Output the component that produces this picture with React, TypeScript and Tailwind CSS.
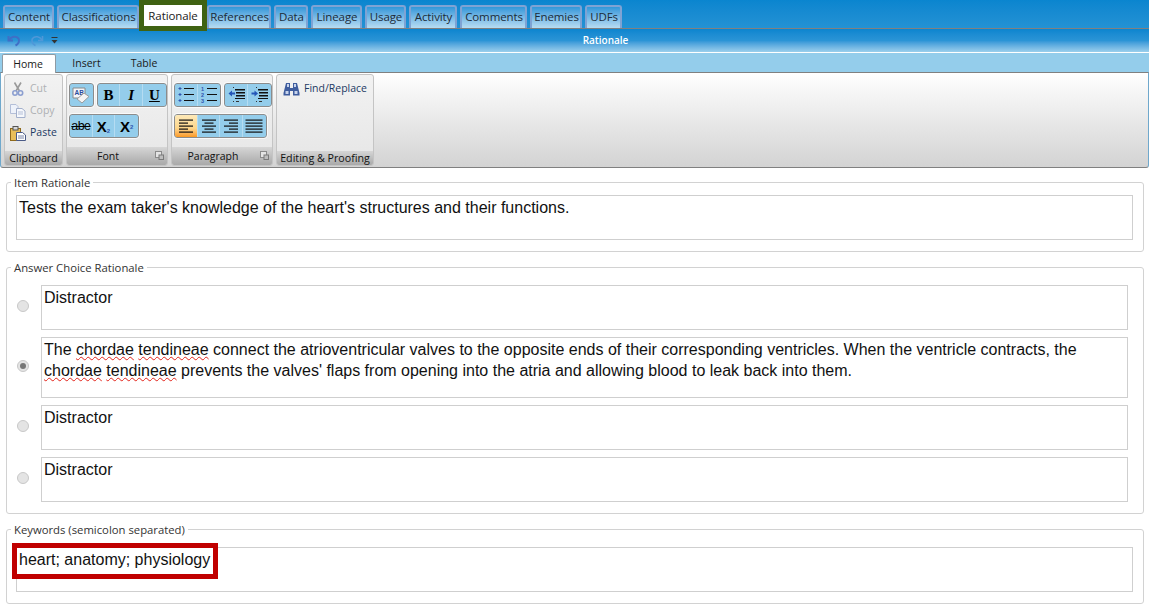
import React from 'react';

const UI_FONT = "font-['Open_Sans','Noto_Sans',sans-serif]";
const BODY_FONT = "font-['Liberation_Sans',Arial,sans-serif]";

const TABS = [
  { label: 'Content', width: 'w-[51px]' },
  { label: 'Classifications', width: 'w-[82px]' },
  { label: 'Rationale', width: 'w-[68px]' },
  { label: 'References', width: 'w-[64px] -ml-[3px]' },
  { label: 'Data', width: 'w-[34px]' },
  { label: 'Lineage', width: 'w-[51px]' },
  { label: 'Usage', width: 'w-[41px]' },
  { label: 'Activity', width: 'w-[48px]' },
  { label: 'Comments', width: 'w-[67px]' },
  { label: 'Enemies', width: 'w-[52px]' },
  { label: 'UDFs', width: 'w-[37px]' },
];

function ItemTab({ label, width }: { label: string; width: string }) {
  if (label === 'Rationale') {
    return (
      <div className={`z-10 -ml-[3px] flex h-[31px] shrink-0 items-center justify-center self-start border-[5px] border-[#3f6212] bg-white text-[11.5px] tracking-[-0.1px] text-[#222] ${width}`}>
        {label}
      </div>
    );
  }
  return (
    <div className={`flex h-[23px] shrink-0 items-center justify-center rounded-t-[3px] border-x-[2px] border-t-[2px] border-[#7fa3d4] bg-gradient-to-b from-[#2f97d9] to-[#b6dcf2] pb-[1px] pl-[1px] text-[11.5px] tracking-[-0.1px] text-[#1c2b38] ${width}`}>
      {label}
    </div>
  );
}

function Cell({ children, active, last }: { children: React.ReactNode; active?: boolean; last?: boolean }) {
  return (
    <div
      className={`flex h-full w-[22.7px] items-center justify-center ${last ? '' : 'border-r border-[#b5dcf2]'} ${
        active ? 'bg-gradient-to-b from-[#fde9b8] via-[#fdd68a] via-60% to-[#fb9a1e]' : ''
      }`}
    >
      {children}
    </div>
  );
}

function ButtonGroup({ children }: { children: React.ReactNode }) {
  return (
    <div className="flex h-[24px] overflow-hidden rounded-[3px] border border-[#8c8c8c] bg-[#94cdeb] outline outline-1 outline-white/70">
      {children}
    </div>
  );
}

function RibbonGroup({ title, width, small, launcher, children }: { title: string; width: string; small?: boolean; launcher?: boolean; children: React.ReactNode }) {
  return (
    <div className={`flex h-[92px] flex-col overflow-hidden rounded-[3px] border border-[#c4c4c4] bg-gradient-to-b from-[#f2f2f2] to-[#e6e6e6] ${width}`}>
      <div className="flex-1">{children}</div>
      <div
        className={`relative flex items-center justify-center bg-gradient-to-b from-[#d6d6d6] to-[#a9a9a9] text-[#111] ${
          small ? 'h-[14px] text-[10.7px]' : 'h-[18px] pr-[18px] pt-[1px] text-[10.5px]'
        }`}
      >
        {title}
        {launcher && (
          <svg viewBox="0 0 9 9" className="absolute right-[3px] top-[4px] h-[9px] w-[9px]">
            <rect x="0.5" y="0.5" width="6" height="6" fill="#e4e4e4" stroke="#8a8a8a" />
            <rect x="4" y="4" width="4.5" height="4.5" fill="#bdbdbd" stroke="#7a7a7a" />
          </svg>
        )}
      </div>
    </div>
  );
}

function AlignIcon({ align }: { align: 'left' | 'center' | 'right' | 'justify' }) {
  const rows = align === 'justify' ? [17, 17, 17, 17, 17] : [14, 9, 14, 9, 14];
  return (
    <svg viewBox="0 0 18 14" className="h-[14px] w-[18px]">
      {rows.map((w, i) => {
        const x = align === 'right' ? 16 - w : align === 'center' ? 9 - w / 2 : align === 'left' ? 2 : 0.5;
        return <rect key={i} x={x} y={i * 3 + 0.5} width={w} height="1.2" fill="#111" />;
      })}
    </svg>
  );
}

function ListIcon({ numbered }: { numbered?: boolean }) {
  return (
    <svg viewBox="0 0 16 16" className="h-[16px] w-[16px]">
      {[1, 7, 13].map((y, i) => (
        <g key={y}>
          {numbered ? (
            <text x="0" y={y + 2.5} fontSize="5.5" fontFamily="Liberation Sans" fontWeight="700" fill="#2f55b0">
              {i + 1}
            </text>
          ) : (
            <path d={`M0.5 ${y + 0.5} H3.5 M2 ${y - 1} V${y + 2}`} stroke="#2f55b0" strokeWidth="1" />
          )}
          <rect x="6" y={y} width="10" height="1" fill="#111" />
        </g>
      ))}
    </svg>
  );
}

function IndentIcon({ flip }: { flip?: boolean }) {
  return (
    <svg viewBox="0 0 17 16" className="h-[16px] w-[17px]">
      <path d={flip ? 'M7 6.5 L3.5 3.5 L3.5 5.5 L0.5 5.5 L0.5 7.5 L3.5 7.5 L3.5 9.5 Z' : 'M0.5 6.5 L4 3.5 L4 5.5 L7 5.5 L7 7.5 L4 7.5 L4 9.5 Z'} fill="#2456b8" />
      <rect x="5" y="0" width="1" height="1" fill="#333" />
      <rect x="7" y="2" width="10" height="1.5" fill="#111" />
      <rect x="8" y="5" width="9" height="1.5" fill="#111" />
      <rect x="8" y="8" width="9" height="1.5" fill="#111" />
      <rect x="7" y="11" width="10" height="1" fill="#111" />
      <rect x="5" y="14" width="1" height="1" fill="#333" />
      <rect x="8" y="14" width="3" height="1" fill="#333" />
    </svg>
  );
}

function MenuIcon({ kind }: { kind: 'cut' | 'copy' | 'paste' }) {
  if (kind === 'cut') {
    return (
      <svg viewBox="0 0 12 14" className="h-[14px] w-[12px]">
        <path d="M2.5 0.5 L7.5 9 M9 0.5 L4 9" stroke="#9a9a9a" strokeWidth="1.6" fill="none" />
        <circle cx="3" cy="11" r="2.2" fill="none" stroke="#8c9fd0" strokeWidth="1.6" />
        <circle cx="8.5" cy="11" r="2.2" fill="none" stroke="#8c9fd0" strokeWidth="1.6" />
      </svg>
    );
  }
  if (kind === 'copy') {
    return (
      <svg viewBox="0 0 16 14" className="h-[14px] w-[16px]">
        <path d="M0.5 0.5 H6 L8 2.5 V9.5 H0.5 Z" fill="#eef2fa" stroke="#b4bfd8" />
        <path d="M6.5 4.5 H12 L15 7 V13.5 H6.5 Z" fill="#f6f8fc" stroke="#a3b0cc" />
        <path d="M8 8 H13 M8 10 H13" stroke="#b4bfd8" />
      </svg>
    );
  }
  return (
    <svg viewBox="0 0 16 15" className="h-[15px] w-[16px]">
      <rect x="0.5" y="2.5" width="10" height="12" fill="#e9bf5a" stroke="#8f6a1c" />
      <rect x="3" y="0.5" width="5" height="3.5" fill="#d8d8d8" stroke="#555" />
      <path d="M6.5 6.5 H12.5 L15.5 9 V14.5 H6.5 Z" fill="#fff" stroke="#4a5a86" />
      <path d="M8 10 H14 M8 12 H14" stroke="#7a86a8" />
    </svg>
  );
}

function ClipboardRow({ kind, label, disabled }: { kind: 'cut' | 'copy' | 'paste'; label: string; disabled?: boolean }) {
  return (
    <div className="flex h-[22px] items-center">
      <div className="flex w-[25px] justify-center">
        <MenuIcon kind={kind} />
      </div>
      <span className={`text-[10.5px] ${disabled ? 'text-[#aeb0b3]' : 'text-[#1d3a63]'}`}>{label}</span>
    </div>
  );
}

function Ribbon() {
  return (
    <div className={`${UI_FONT}`}>
      <div className="flex h-[23px] items-center bg-gradient-to-b from-[#0a85cf] via-[#2a94d6] to-[#9bcfec] pl-[7px]">
        <svg viewBox="0 0 14 13" className="h-[13px] w-[14px]" fill="none">
          <path d="M1.5 2 V6.5 H6" stroke="#3f6fc6" strokeWidth="2" />
          <path d="M2 6 C4 2.5 9 1.5 11.5 4.5 C13 7 11.5 10 8.5 11.5" stroke="#3f6fc6" strokeWidth="2" />
        </svg>
        <svg viewBox="0 0 14 13" className="ml-[9px] h-[13px] w-[14px]" fill="none">
          <path d="M12.5 2 V6.5 H8" stroke="#4f98d8" strokeWidth="1.6" />
          <path d="M12 6 C10 2.5 5 1.5 2.5 4.5 C1 7 2.5 10 5.5 11.5" stroke="#4f98d8" strokeWidth="1.6" />
        </svg>
        <svg viewBox="0 0 7 7" className="ml-[7px] h-[7px] w-[7px]">
          <rect x="0.5" y="0" width="6" height="1" fill="#333" />
          <path d="M0.5 3 H6.5 L3.5 6.5 Z" fill="#333" />
        </svg>
        <div className="flex-1 text-center text-[10px] font-semibold text-white">
          <span className="relative left-[2px]">Rationale</span>
        </div>
      </div>
      <div className="h-px bg-white" />
      <div className="flex h-[19px] items-end bg-[#94cdeb] pl-[2px] text-[10.5px] text-[#1a1a1a]">
        <div className="z-10 flex h-[19px] w-[54px] translate-y-px items-center justify-center rounded-t-[2px] border-x border-t border-[#8e9aa3] bg-white pr-[2px] pt-[1px]">Home</div>
        <div className="flex h-[19px] w-[58px] items-center justify-center pl-[3px] pt-[2px]">Insert</div>
        <div className="flex h-[19px] w-[58px] items-center justify-center pl-[2px] pt-[2px]">Table</div>
      </div>
      <div className="flex h-[96px] gap-[3px] rounded-b-[3px] border border-[#808080] border-x-[#6fa8cc] bg-gradient-to-b from-white to-[#d3d3d3] pt-[1px] pl-[3px] pr-[1px]">
        <RibbonGroup title="Clipboard" width="w-[59px]" small>
          <div className="pt-[3px]">
            <ClipboardRow kind="cut" label="Cut" disabled />
            <ClipboardRow kind="copy" label="Copy" disabled />
            <ClipboardRow kind="paste" label="Paste" />
          </div>
        </RibbonGroup>
        <RibbonGroup title="Font" width="w-[102px]" launcher>
          <div className="flex flex-col gap-[7px] pl-[2px] pt-[8px]">
            <div className="flex gap-[3px]">
              <ButtonGroup>
                <Cell last>
                  <svg viewBox="0 0 18 17" className="h-[17px] w-[18px]">
                    <path d="M1 1 H13 V11 H1 Z" fill="#f4f6fa" stroke="#8a8a8a" />
                    <text x="2.5" y="8" fontSize="6.5" fontWeight="700" fontFamily="Liberation Sans" fill="#274b9c">AB</text>
                    <path d="M5 12 L12 6 L17 9.5 L10 16 Z" fill="#f4f4f4" stroke="#9a9a9a" />
                  </svg>
                </Cell>
              </ButtonGroup>
              <ButtonGroup>
                <Cell><span className="font-['Liberation_Serif',serif] text-[15px] font-bold leading-none text-black">B</span></Cell>
                <Cell><span className="font-['Liberation_Serif',serif] text-[15px] font-bold italic leading-none text-black">I</span></Cell>
                <Cell last><span className="font-['Liberation_Serif',serif] text-[15px] font-bold leading-none text-black underline">U</span></Cell>
              </ButtonGroup>
            </div>
            <div className="flex">
              <ButtonGroup>
                <Cell><span className="font-['Liberation_Sans',sans-serif] text-[12.5px] leading-none tracking-[-0.6px] text-black line-through">abe</span></Cell>
                <Cell>
                  <span className="font-['Liberation_Sans',sans-serif] text-[15px] font-bold leading-none text-black">X<sub className="text-[6px] text-[#2f55b0]">2</sub></span>
                </Cell>
                <Cell last>
                  <span className="font-['Liberation_Sans',sans-serif] text-[15px] font-bold leading-none text-black">X<sup className="text-[6px] text-[#2f55b0]">2</sup></span>
                </Cell>
              </ButtonGroup>
            </div>
          </div>
        </RibbonGroup>
        <RibbonGroup title="Paragraph" width="w-[102px]" launcher>
          <div className="flex flex-col gap-[7px] pl-[2px] pt-[8px]">
            <div className="flex gap-[3px]">
              <ButtonGroup>
                <Cell><ListIcon /></Cell>
                <Cell last><ListIcon numbered /></Cell>
              </ButtonGroup>
              <ButtonGroup>
                <Cell><IndentIcon /></Cell>
                <Cell last><IndentIcon flip /></Cell>
              </ButtonGroup>
            </div>
            <div className="flex">
              <ButtonGroup>
                <Cell active><AlignIcon align="left" /></Cell>
                <Cell><AlignIcon align="center" /></Cell>
                <Cell><AlignIcon align="right" /></Cell>
                <Cell last><AlignIcon align="justify" /></Cell>
              </ButtonGroup>
            </div>
          </div>
        </RibbonGroup>
        <RibbonGroup title="Editing & Proofing" width="w-[98px]" small>
          <div className="flex items-center gap-[4px] pl-[6px] pt-[6px]">
            <svg viewBox="0 0 17 14" className="h-[14px] w-[17px]">
              <path d="M3 1 H7 V6 H10 V1 H14 L16.5 11 V13.5 H10 V9 H7 V13.5 H0.5 V11 Z" fill="#3f5d9e" />
              <path d="M2.5 9 H5.5 V12 H2.5 Z M11.5 9 H14.5 V12 H11.5 Z M4 2 H6 V5 H4 Z M11 2 H13 V5 H11 Z" fill="#c8d4ec" />
            </svg>
            <span className="text-[10.5px] text-[#1d3a63]">Find/Replace</span>
          </div>
        </RibbonGroup>
      </div>
    </div>
  );
}

function Box({ height, children }: { height: string; children?: React.ReactNode }) {
  return (
    <div className={`border border-[#cfcfcf] px-[2px] pt-[1px] ${BODY_FONT} text-[16px] leading-[21px] text-[#111] ${height}`}>
      {children}
    </div>
  );
}

function Field({ legend, className, children }: { legend: string; className: string; children: React.ReactNode }) {
  return (
    <fieldset className={`rounded-[3px] border border-[#d2d2d2] ${className}`}>
      <legend className={`ml-[4px] px-[3px] text-[11.3px] leading-[14px] text-[#333] ${UI_FONT}`}>
        <span className="relative top-[1px]">{legend}</span>
      </legend>
      {children}
    </fieldset>
  );
}

function Radio({ checked }: { checked?: boolean }) {
  return (
    <div className="flex w-[34px] shrink-0 items-center justify-center pb-[3px] pr-[2px]">
      <div className="flex h-[12px] w-[12px] items-center justify-center rounded-full border border-[#c8c8c8] bg-[#e4e4e4]">
        {checked && <div className="h-[6px] w-[6px] rounded-full bg-[#777]" />}
      </div>
    </div>
  );
}

function Misspelled({ children }: { children: string }) {
  return <span className="underline decoration-[#e2231a] decoration-wavy decoration-1 underline-offset-1">{children}</span>;
}

export default function App() {
  return (
    <div className="h-[611px] w-[1149px] overflow-hidden bg-white">
      <div className={`flex h-[29px] items-end gap-[3px] border-b border-[#808080] bg-gradient-to-b from-[#0a85cf] to-[#2392d4] pl-[3px] ${UI_FONT}`}>
        {TABS.map((t) => (
          <ItemTab key={t.label} label={t.label} width={t.width} />
        ))}
      </div>
      <Ribbon />
      <div className="flex flex-col gap-[8px] pl-[6px] pr-[5px] pt-[7px]">
        <Field legend="Item Rationale" className="h-[77px]">
          <div className="pl-[9px] pr-[10px] pt-[6px]">
            <Box height="h-[45px]">Tests the exam taker's knowledge of the heart's structures and their functions.</Box>
          </div>
        </Field>
        <Field legend="Answer Choice Rationale" className="h-[254px]">
          <div className="flex flex-col gap-[7px] pr-[15px] pt-[11px]">
            <div className="flex">
              <Radio />
              <Box height="h-[45px] flex-1">Distractor</Box>
            </div>
            <div className="flex">
              <Radio checked />
              <Box height="h-[61px] flex-1">
                The <Misspelled>chordae</Misspelled> <Misspelled>tendineae</Misspelled> connect the atrioventricular valves to the opposite ends of their corresponding ventricles. When the ventricle contracts, the{' '}
                <Misspelled>chordae</Misspelled> <Misspelled>tendineae</Misspelled> prevents the valves' flaps from opening into the atria and allowing blood to leak back into them.
              </Box>
            </div>
            <div className="flex">
              <Radio />
              <Box height="h-[45px] flex-1">Distractor</Box>
            </div>
            <div className="flex">
              <Radio />
              <Box height="h-[45px] flex-1">Distractor</Box>
            </div>
          </div>
        </Field>
        <Field legend="Keywords (semicolon separated)" className="h-[82px]">
          <div className="pl-[9px] pr-[10px] pt-[11px]">
            <Box height="h-[45px] relative">
              <span className="absolute left-[-5px] top-[-5px] flex h-[36px] w-[206px] items-center border-[5px] border-[#c00000] bg-white pb-[4px] pl-[2px] text-[16px]">
                heart; anatomy; physiology
              </span>
            </Box>
          </div>
        </Field>
      </div>
    </div>
  );
}
